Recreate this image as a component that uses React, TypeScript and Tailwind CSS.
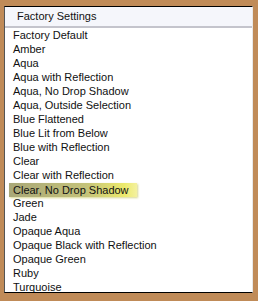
import React from "react";

const items = [
  "Factory Default",
  "Amber",
  "Aqua",
  "Aqua with Reflection",
  "Aqua, No Drop Shadow",
  "Aqua, Outside Selection",
  "Blue Flattened",
  "Blue Lit from Below",
  "Blue with Reflection",
  "Clear",
  "Clear with Reflection",
  "Clear, No Drop Shadow",
  "Green",
  "Jade",
  "Opaque Aqua",
  "Opaque Black with Reflection",
  "Opaque Green",
  "Ruby",
  "Turquoise",
];

export default function App() {
  return (
    <div
      className="w-[258px] h-[301px] bg-[#c08b58] pl-[4px] pr-[5px] pt-[6px] pb-[8px] overflow-hidden"
      style={{ fontFamily: '"Liberation Sans", Arial, sans-serif' }}
    >
      <div className="h-full bg-white border-t-[1px] border-b-[1px] border-l-[1px] border-t-black border-b-black border-l-[#555] border-r-[1px] border-r-[#e8e8e8] overflow-hidden flex flex-col">
        <div className="h-[21px] shrink-0 bg-[#f5f6fb] border-b-[2px] border-b-[#c4c4cc] pl-[12px] flex items-center text-[11px] text-[#111]">
          Factory Settings
        </div>
        <div className="flex flex-col">
          {items.map((it) => {
            const sel = it === "Clear, No Drop Shadow";
            return (
              <div key={it} className="h-[14px] shrink-0 flex items-center text-[11px] text-[#111] leading-[14px]">
                {sel ? (
                  <span className="ml-[4px] pl-[4px] pr-[8px] h-[14px] mt-[2px] flex items-center bg-[linear-gradient(to_right,#a9a878,#c4c27a_60%,#ecea6c_90%,#f4f1a0)] shadow-[1px_1px_2px_#d8d890]">
                    {it}
                  </span>
                ) : (
                  <span className="pl-[8px]">{it}</span>
                )}
              </div>
            );
          })}
        </div>
      </div>
    </div>
  );
}
